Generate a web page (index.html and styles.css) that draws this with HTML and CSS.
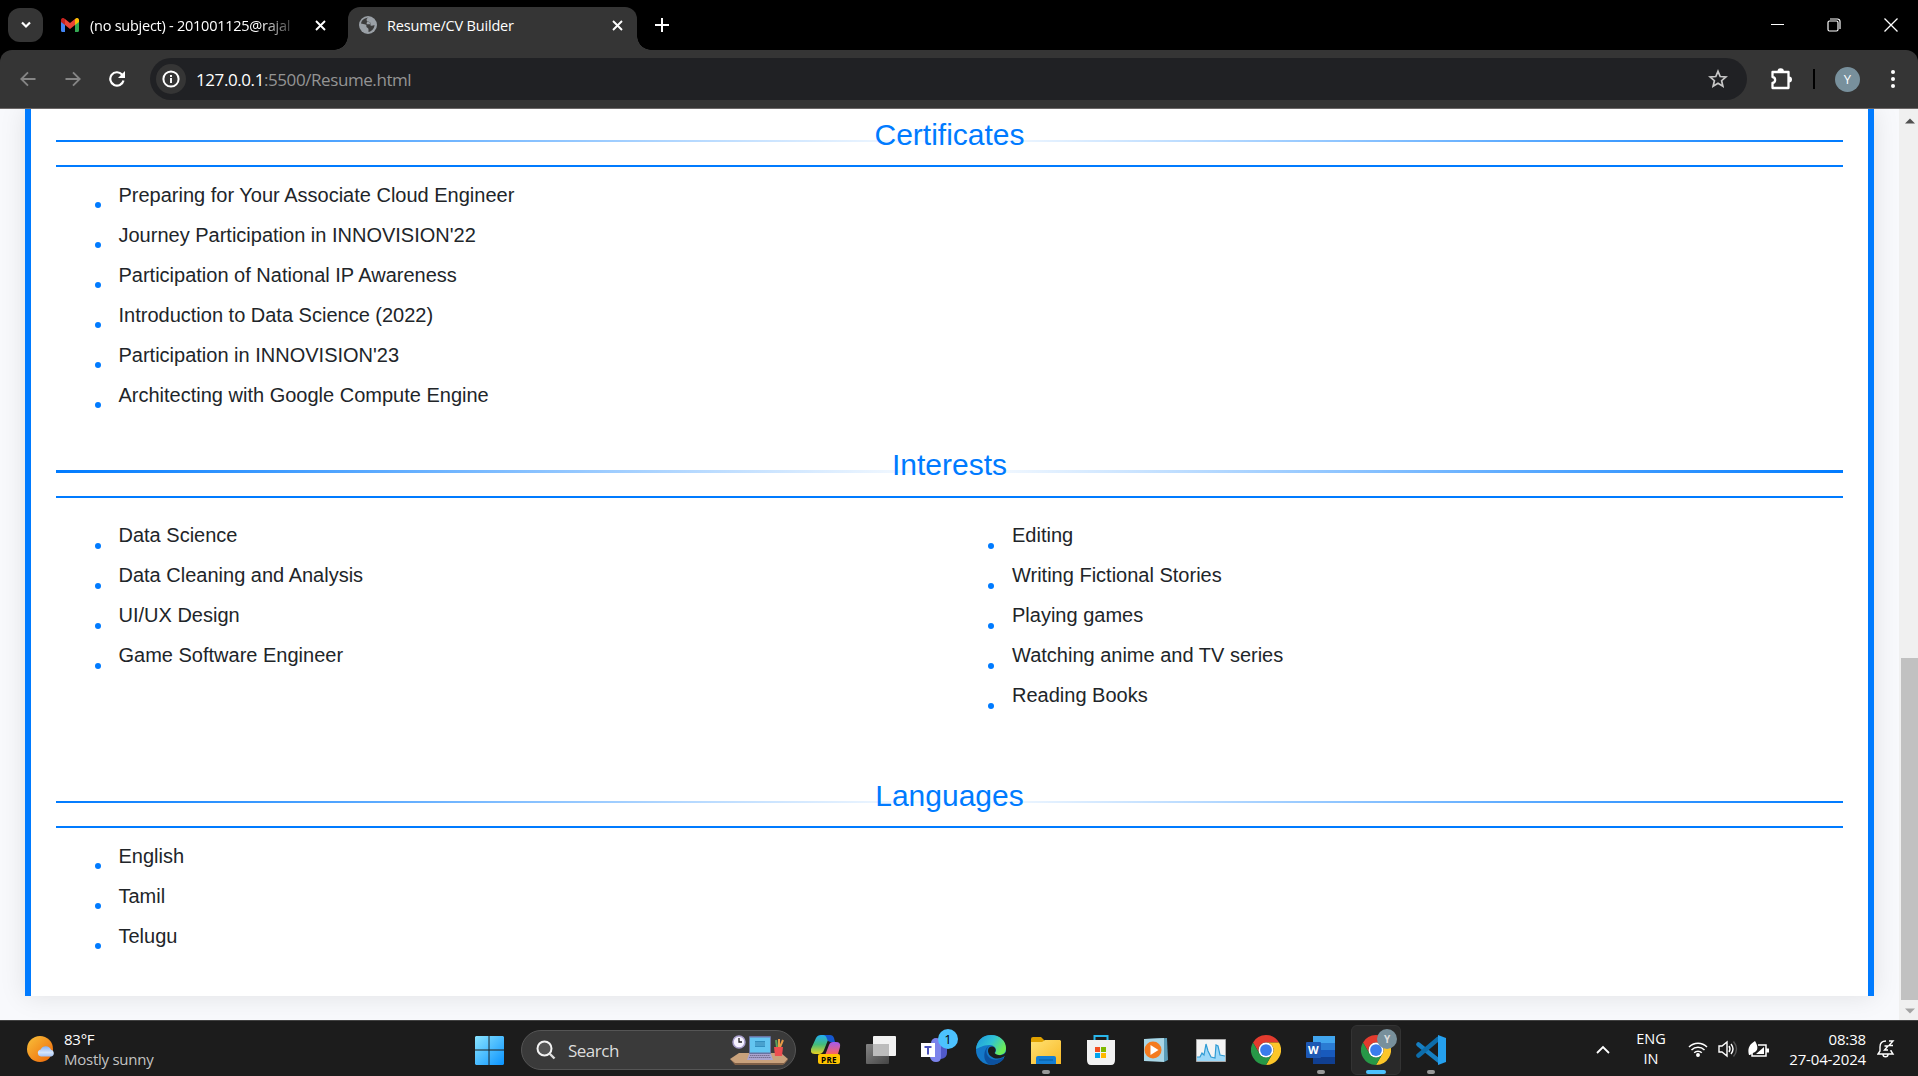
FILE: index.html
```html
<!DOCTYPE html>
<html lang="en">
<head>
<meta charset="utf-8">
<title>Resume/CV Builder</title>
<link rel="stylesheet" href="styles.css">
</head>
<body>
<svg class="defs" width="0" height="0" aria-hidden="true">
  <defs>
    <linearGradient id="win" x1="0" y1="0" x2="1" y2="1"><stop offset="0" stop-color="#8ae4ff"/><stop offset="1" stop-color="#0a93ff"/></linearGradient>
    <linearGradient id="sun" x1="0" y1="0" x2="1" y2="1"><stop offset="0" stop-color="#f8c13a"/><stop offset="1" stop-color="#ee6508"/></linearGradient>
    <linearGradient id="cloud" x1="0" y1="0" x2="0" y2="1"><stop offset="0" stop-color="#86b1f4"/><stop offset=".6" stop-color="#d5e5fc"/><stop offset="1" stop-color="#a4c3f5"/></linearGradient>
    <linearGradient id="copA" x1="0" y1="0" x2="0" y2="1"><stop offset="0" stop-color="#22aef2"/><stop offset=".5" stop-color="#44bc7b"/><stop offset="1" stop-color="#e8d220"/></linearGradient>
    <linearGradient id="copB" x1="0" y1="0" x2="0" y2="1"><stop offset="0" stop-color="#a45af0"/><stop offset="1" stop-color="#fa665f"/></linearGradient>
    <linearGradient id="edgeA" x1="0" y1="0" x2="1" y2=".5"><stop offset="0" stop-color="#1d94e0"/><stop offset=".55" stop-color="#30c3d4"/><stop offset="1" stop-color="#6bec58"/></linearGradient>
    <linearGradient id="fold" x1="0" y1="0" x2="1" y2="1"><stop offset="0" stop-color="#ffe174"/><stop offset="1" stop-color="#f9b925"/></linearGradient>
    <linearGradient id="grey" x1="0" y1="0" x2="1" y2="1"><stop offset="0" stop-color="#858585"/><stop offset="1" stop-color="#444"/></linearGradient>
    <symbol id="chrome" viewBox="0 0 48 48">
      <path fill="#e33b2e" d="M24 0a24 24 0 0 1 20.8 12H24a12 12 0 0 0-10.4 18L3.2 12A24 24 0 0 1 24 0z"/>
      <path fill="#fcc629" d="M44.8 12A24 24 0 0 1 24 48l10.4-18A12 12 0 0 0 24 12z"/>
      <path fill="#279847" d="M3.2 12A24 24 0 0 0 24 48l10.4-18a12 12 0 0 1-20.8 0z"/>
      <circle cx="24" cy="24" r="12" fill="#fff"/><circle cx="24" cy="24" r="9.4" fill="#3a7cec"/>
    </symbol>
  </defs>
</svg>

<header class="tabstrip">
  <button class="tab-search" aria-label="Search tabs"><svg width="12" height="8" viewBox="0 0 12 8"><path d="M2 1.5 6 5.5 10 1.5" fill="none" stroke="#fff" stroke-width="2.2"/></svg></button>
  <div class="tab idle">
    <svg width="18" height="14" viewBox="0 0 18 14"><path fill="#4285f4" d="M0 2v10.5c0 .8.6 1.5 1.4 1.5H4V5z"/><path fill="#34a853" d="M18 2v10.5c0 .8-.6 1.5-1.4 1.5H14V5z"/><path fill="#ea4335" d="M4 7V1l5 4 5-4v6l-5 4z"/><path fill="#c5221f" d="M0 2C0 .2 2 -.6 3.300 .4L4 1v6L0 4z"/><path fill="#fbbc04" d="M18 2c0-1.800-2-2.600-3.300-1.600L14 1v6l4-3z"/></svg>
    <span class="tab-title fade">(no subject) - 201001125@rajal</span>
    <svg class="x" width="11" height="11" viewBox="0 0 11 11"><path d="m1 1 9 9M10 1 1 10" stroke="#fff" stroke-width="1.9"/></svg>
  </div>
  <div class="tab active">
    <svg width="18" height="18" viewBox="0 0 18 18"><circle cx="9" cy="9" r="9" fill="#9aa0a6"/><path d="M10 1.500C7 2 7 5 9 5.500s3 1 2.500 3 2.500 1 4 .500c-.200 4-3 6.500-6 7v-2.500c0-1.500-1.500-1.500-2-2.500s.500-2-1-2.500L2 7.500C2.500 4.500 5 1.800 10 1.500z" fill="#3c3c3c"/><path d="M8 5.500c2 .2 3.500 1 3.500 2.700H7.500z" fill="#9aa0a6"/></svg>
    <span class="tab-title">Resume/CV Builder</span>
    <svg class="x" width="11" height="11" viewBox="0 0 11 11"><path d="m1 1 9 9M10 1 1 10" stroke="#fff" stroke-width="1.9"/></svg>
  </div>
  <svg class="plus" width="14" height="14" viewBox="0 0 14 14"><path d="M7 0v14M0 7h14" stroke="#fff" stroke-width="2"/></svg>
  <div class="window-buttons">
    <svg width="14" height="14" viewBox="0 0 14 14"><path d="M1 6.500h13" stroke="#fff" stroke-width="1"/></svg>
    <svg width="14" height="14" viewBox="0 0 14 14" fill="none" stroke="#fff" stroke-width="1.200"><rect x="1" y="3" width="10" height="10" rx="1.500"/><path d="M3 1h7.500a2.500 2.500 0 0 1 2.500 2.500V11"/></svg>
    <svg width="14" height="14" viewBox="0 0 14 14"><path d="m.5.5 13 13m0-13-13 13" stroke="#fff" stroke-width="1.300"/></svg>
  </div>
</header>

<nav class="toolbar">
  <svg width="16" height="16" viewBox="0 0 16 16" fill="none" stroke="#858585" stroke-width="1.900"><path d="M15.500 8H1.500M8 1.300 1.300 8 8 14.700"/></svg>
  <svg width="16" height="16" viewBox="0 0 16 16" fill="none" stroke="#858585" stroke-width="1.900"><path d="M.5 8h14M8 1.300 14.700 8 8 14.700"/></svg>
  <svg width="16" height="16" viewBox="0 0 16 16"><path d="M14.500 9.500A6.700 6.700 0 1 1 13 3.500L14 4.500" fill="none" stroke="#fff" stroke-width="2.200"/><path d="M16 0v7H9z" fill="#fff"/></svg>
  <div class="omnibox">
    <span class="info"><svg width="18" height="18" viewBox="0 0 18 18"><circle cx="9" cy="9" r="7.600" fill="none" stroke="#fff" stroke-width="2"/><path d="M9 8v5M9 5v2" stroke="#fff" stroke-width="1.900"/></svg></span>
    <span class="url">127.0.0.1<i>:5500/Resume.html</i></span>
    <svg class="star" width="20" height="20" viewBox="0 0 20 20"><path d="m10 2.300 2.200 5.200 5.700.500-4.300 3.700 1.300 5.600-4.900-3-4.900 3 1.300-5.600L2.100 8l5.700-.5z" fill="none" stroke="#c7c7c7" stroke-width="1.700"/></svg>
  </div>
  <svg class="puzzle" width="22" height="22" viewBox="0 0 22 22"><path d="M2.500 4h16v16h-16v-5c3.500-.5 3.500-5.500 0-6z" fill="none" stroke="#fff" stroke-width="2.300" stroke-linejoin="round"/><path d="M7.500 3.500a3.200 3.200 0 0 1 6.400 0zM19 8.500a3 3 0 0 1 0 6z" fill="#fff"/></svg>
  <span class="divider"></span>
  <span class="avatar">Y</span>
  <svg class="dots" width="4" height="18" viewBox="0 0 4 18" fill="#fff"><circle cx="2" cy="2" r="2"/><circle cx="2" cy="9" r="2"/><circle cx="2" cy="16" r="2"/></svg>
</nav>

<div class="viewport">
  <main class="page">
    <article class="resume">
      <section class="certificates">
        <h2>Certificates</h2>
        <ul><li>Preparing for Your Associate Cloud Engineer</li><li>Journey Participation in INNOVISION'22</li><li>Participation of National IP Awareness</li><li>Introduction to Data Science (2022)</li><li>Participation in INNOVISION'23</li><li>Architecting with Google Compute Engine</li></ul>
      </section>
      <section class="interests">
        <h2>Interests</h2>
        <div class="columns">
          <ul><li>Data Science</li><li>Data Cleaning and Analysis</li><li>UI/UX Design</li><li>Game Software Engineer</li></ul>
          <ul><li>Editing</li><li>Writing Fictional Stories</li><li>Playing games</li><li>Watching anime and TV series</li><li>Reading Books</li></ul>
        </div>
      </section>
      <section class="languages">
        <h2>Languages</h2>
        <ul><li>English</li><li>Tamil</li><li>Telugu</li></ul>
      </section>
    </article>
  </main>
  <aside class="scrollbar">
    <svg width="10" height="6" viewBox="0 0 10 6"><path d="M0 5.500 5 .5l5 5z" fill="#505050"/></svg>
    <span class="thumb"></span>
    <svg width="10" height="6" viewBox="0 0 10 6"><path d="M0 .5 5 5.500l5-5z" fill="#a3a3a3"/></svg>
  </aside>
</div>

<footer class="taskbar">
  <div class="weather">
    <svg width="28" height="26" viewBox="0 0 28 26"><circle cx="13" cy="13" r="13" fill="url(#sun)"/><path d="M14 20.500a3.600 3.600 0 0 1-.300-7.100 5.700 5.700 0 0 1 10.300.300 3.500 3.500 0 0 1 .300 6.800z" fill="url(#cloud)"/></svg>
    <p>83°F<br><span>Mostly sunny</span></p>
  </div>
  <div class="apps">
    <svg class="start" width="29" height="29" viewBox="0 0 30 30" fill="url(#win)"><path d="M1 0h13v14H0V1zM15 0h14l1 1v13H15zM0 15h14v15H1l-1-1zM15 15h15v14l-1 1H15z"/></svg>
    <div class="search">
      <svg width="20" height="20" viewBox="0 0 20 20"><circle cx="8.500" cy="8.500" r="7" fill="#555" stroke="#f3f3f3" stroke-width="2"/><path d="m13.500 13.500 5 5" stroke="#ddd" stroke-width="2.400"/></svg>
      <span>Search</span>
      <svg class="desk" width="58" height="30" viewBox="0 0 58 30"><path d="M9 18h42l7 6-4 5H5l-5-5z" fill="#c9a27c"/><path d="m0 24 5 4h49l4-4v1l-5 5H5z" fill="#806047"/><circle cx="9" cy="7" r="6" fill="#f6f2ff" stroke="#aaa0cd" stroke-width="1.500"/><path d="M9 3v4h3" fill="none" stroke="#222" stroke-width="1.300"/><rect x="19" y="1" width="22" height="18" rx="1" fill="#6873a2"/><rect x="20" y="2.500" width="20" height="15" fill="#63c5f1"/><rect x="25" y="6" width="10" height="6" fill="#328fc1"/><path d="M25 8h10M25 10h10" stroke="#81cef0" stroke-width=".6"/><path d="M19 19h22l2 6H17z" fill="#aaa4cf"/><path d="M20 20.500h20M19 22.500h22" stroke="#767091" stroke-dasharray="1.500 .5"/><path d="m47 12-1-7" stroke="#5aa05a" stroke-width="2"/><path d="M49 12V4M50 12l3-7" stroke="#e79b46" stroke-width="2"/><path d="M44 12h9l-1 9h-7z" fill="#ed4d50"/></svg>
    </div>
    <div class="app copilot"><svg width="30" height="30" viewBox="0 0 30 30"><path d="M5 3q1.500-3 5-3h9l-6 15q-1.500 4-5 4H4q-5 0-4-5z" fill="url(#copA)"/><path d="M12 0h7q3 0 4 3l1 4h-4q-3 0-4-3-1-4-4-4z" fill="#1557cf"/><path d="M18 10q1-3 4-3h3q5 0 4 5l-2 7H14.500z" fill="url(#copB)"/><rect x="7" y="19" width="22" height="10" rx="2" fill="#ffc400"/></svg><b>PRE</b></div>
    <div class="app"><svg width="30" height="28" viewBox="0 0 30 28"><rect x="7" width="23" height="20" rx="1" fill="#f2f2f2"/><rect y="8" width="23" height="20" rx="1" fill="url(#grey)"/><path d="M7 8h16v12H7z" fill="#bcbcbc"/></svg></div>
    <div class="app teams"><svg width="30" height="28" viewBox="0 0 30 28"><circle cx="15" cy="7" r="5" fill="#7b83eb"/><path d="M17 9h9v8q0 5-6 6h-3z" fill="#5059c9"/><path d="M8 9h12v12q0 5-5 5t-6-5z" fill="#7b83eb"/><rect y="7" width="14" height="14" fill="#fff"/><path d="M3.500 11h7M7 11v7.500" stroke="#4b53bc" stroke-width="2"/></svg><b>1</b></div>
    <div class="app"><svg width="30" height="30" viewBox="0 0 30 30"><circle cx="15" cy="15" r="15" fill="#1478c8"/><path d="M0 14C1 5 7 0 15 0c9 0 15 6 15 13 0 5-3 7-7 7-3 0-4-1-4-2 1-1 1-2 1-3 0-3-3-5-7-5C7 10 3 13 0 14z" fill="url(#edgeA)"/><path d="M13 11c-4 3-3 9 1 12 4 2.500 9 2 13-.5l1 1c-3 4-8 6.500-13 6.500C6 28 7 14 13 11z" fill="#0c519f"/><path d="M16.500 11.500c-5-.5-6 6-2 9.500 3.500 3 8 3.200 12 1.300l3.500-1.800v-3.500c-3 4-8 4-11 1.500-.5-.500-.300-1 .300-2 1.200-2-.300-4.500-2.800-5z" fill="#1c1c1c"/></svg></div>
    <div class="app run"><svg width="30" height="27" viewBox="0 0 30 27"><path d="M0 2q0-2 2-2h8l4 4v7H0z" fill="#e0a100"/><path d="M0 5h11l3-2h15l1 1v23H0z" fill="url(#fold)"/><path d="M5 27v-6q0-2 2-2h16q2 0 2 2v6z" fill="#147ed3"/><path d="M8 23h14" stroke="#075a9d"/></svg></div>
    <div class="app"><svg width="30" height="30" viewBox="0 0 30 30"><path d="M8.500 7V1h13v6" fill="none" stroke="#29b7ec" stroke-width="2"/><path d="M1 5h28v20q0 5-4 5H5q-4 0-4-5z" fill="#f2f2f2"/><path d="M9 12h5v5H9z" fill="#f25022"/><path d="M15 12h5v5h-5z" fill="#7fba00"/><path d="M9 18h5v5H9z" fill="#00a4ef"/><path d="M15 18h5v5h-5z" fill="#ffb900"/></svg></div>
    <div class="app"><svg width="26" height="26" viewBox="0 0 26 26"><path d="m3 2 21-1 1 22-4 2z" fill="#5a9cb8"/><path d="m1 2 20-1v24L1 24z" fill="#a9d6e6"/><circle cx="10" cy="13" r="8.500" fill="#f47b20"/><path d="M7.500 8v10l8-5z" fill="#fff"/></svg></div>
    <div class="app"><svg width="30" height="23" viewBox="0 0 30 23"><path fill="#f4f4f4" stroke="#aaa" d="M.5.5h29v22H.5z"/><path d="M1 18h3l2-4 2 2 2-11 2 7 3 6 4 1 1-13 2 1 2 9 5 1v5H1z" fill="#9cd8f8"/><path d="M1 18h3l2-4 2 2 2-11 2 7 3 6 4 1 1-13 2 1 2 9 5 1" fill="none" stroke="#309bd4" stroke-width="1.200"/></svg></div>
    <div class="app"><svg width="30" height="30"><use href="#chrome"/></svg></div>
    <div class="app run word"><svg width="30" height="28" viewBox="0 0 30 28"><path fill="#41a5ee" d="M7 0h22v7H7z"/><path fill="#2b7cd3" d="M7 7h22v7H7z"/><path fill="#185abd" d="M7 14h22v7H7z"/><path fill="#103f91" d="M7 21h22v7H7z"/><rect y="6" width="15" height="16" rx="1" fill="#1d58b4"/></svg><b>W</b></div>
    <div class="app run current"><svg width="30" height="30"><use href="#chrome"/></svg><b>Y</b></div>
    <div class="app run"><svg width="30" height="30" viewBox="0 0 30 30"><path d="m2.500 9.500 20 16" stroke="#167fc2" stroke-width="4.500" stroke-linecap="round"/><path d="M2.500 20.500 22 4" stroke="#0d6dab" stroke-width="4.500" stroke-linecap="round"/><path d="m22 0 8 3v24l-8 3z" fill="#25a0ee"/></svg></div>
  </div>
  <div class="tray">
    <svg class="up" width="14" height="9" viewBox="0 0 14 9"><path d="m1 8 6-6 6 6" fill="none" stroke="#fff" stroke-width="1.800"/></svg>
    <p class="lang">ENG<br>IN</p>
    <svg class="wifi" width="20" height="16" viewBox="0 0 20 16" fill="none" stroke="#fff" stroke-width="1.500"><path d="M1 6a12.700 12.700 0 0 1 18 0M3.500 9a9.200 9.200 0 0 1 13 0M6.200 11.700a5.400 5.400 0 0 1 7.600 0"/><circle cx="10" cy="14" r="1.200" fill="#fff"/></svg>
    <svg class="sound" width="20" height="18" viewBox="0 0 20 18" fill="none" stroke="#fff" stroke-width="1.400"><path d="M1 6h3l5-4v14l-5-4H1zM11 6q2 3 0 6M13 4q4 5 0 10"/><path d="M15.500 1.500q6 7.500 0 15" stroke="#555"/></svg>
    <svg class="battery" width="21" height="17" viewBox="0 0 21 17"><path d="M10 4h8v11H4v-3" fill="none" stroke="#fff" stroke-width="1.500"/><path d="M18 7.500h3v4h-3zM8 13l8-7v7zM1 14C-1 7 2 3 7 0c3 5 4 10-2 12l-3 2z" fill="#fff"/></svg>
    <p class="clock">08:38<br>27-04-2024</p>
    <svg class="bell" width="18" height="18" viewBox="0 0 18 18" fill="none" stroke="#fff" stroke-width="1.400"><path d="M9 1C5 1 3 3 3 7v4l-2 3h15l-2-3v-1M6 14.500c0 3 5 3 5 0M12 1h4l-4 4.500h4M7.500 6H11l-3.500 4H11"/></svg>
  </div>
</footer>
</body>
</html>
```
FILE: styles.css
```css
* { box-sizing: border-box; }
body { margin: 0; width: 1918px; height: 1076px; overflow: hidden; display: flex; flex-direction: column; background: #000; font-family: "Open Sans", "Noto Sans", sans-serif; }
svg { display: block; flex: none; }
p { margin: 0; }
.defs { position: absolute; }

.tabstrip { height: 50px; display: flex; align-items: center; padding-left: 8px; color: #fff; }
.tab-search { width: 35px; height: 34px; margin-right: 18px; border: 0; border-radius: 12px; background: #353535; display: flex; align-items: center; justify-content: center; padding: 0; }
.tab { display: flex; align-items: center; font-size: 14.5px; letter-spacing: -.25px; }
.idle { width: 287px; padding-right: 22px; }
.active { width: 289px; height: 43px; margin-top: 7px; padding: 0 14px 7px 11px; border-radius: 12px 12px 0 0; background: #353535; position: relative; }
.active::before, .active::after { content: ""; position: absolute; bottom: 0; width: 14px; height: 14px; }
.active::before { left: -14px; background: radial-gradient(circle at 0 0, transparent 13.5px, #353535 14px); }
.active::after { right: -14px; background: radial-gradient(circle at 100% 0, transparent 13.5px, #353535 14px); }
.tab-title { margin-left: 11px; white-space: nowrap; }
.active .tab-title { margin-left: 10px; letter-spacing: -.18px; }
.fade { width: 210px; -webkit-mask-image: linear-gradient(90deg, #000 170px, transparent 210px); mask-image: linear-gradient(90deg, #000 170px, transparent 210px); }
.x { margin-left: auto; }
.plus { margin-left: 18px; }
.window-buttons { margin-left: auto; margin-right: 20px; display: flex; gap: 43px; }

.toolbar { height: 59px; display: flex; align-items: center; padding: 0 23px 0 20px; background: #353535; border-bottom: 1px solid #6b6767; border-radius: 12px 12px 0 0; }
.toolbar > svg + svg { margin-left: 28.5px; }
.omnibox { width: 1597px; height: 42px; margin-left: 25px; padding: 0 19px 0 6px; border-radius: 21px; background: #202124; display: flex; align-items: center; }
.info { width: 30px; height: 30px; border-radius: 50%; background: #353535; display: flex; align-items: center; justify-content: center; }
.url { margin-left: 10px; color: #fff; font-size: 17px; letter-spacing: -.42px; }
.url i { font-style: normal; color: #949494; }
.star { margin-left: auto; }
.puzzle { margin-left: 23px; }
.divider { width: 2px; height: 20px; margin-left: 21px; background: #000; }
.avatar { width: 25px; height: 25px; margin-left: 20px; border-radius: 50%; background: #78909c; color: #fff; font-size: 13px; display: flex; align-items: center; justify-content: center; }
.dots { margin-left: auto; }

.viewport { height: 911px; display: flex; background: #f8f9fa; overflow: hidden; }
.page { width: 1899px; padding: 0 25px; background: #f8f9fc; overflow: hidden; }
.resume { height: 887px; padding: 0 25px; border: solid #007bff; border-width: 0 6px; background: #fff; box-shadow: 0 0 25px rgba(0, 0, 0, .1); color: #212529; font: 20px/30px "Liberation Sans", Arial, sans-serif; }
.resume h2 { height: 58px; margin: 0; padding-top: 8px; border-bottom: 2px solid #007bff; color: #007bff; font-size: 30px; line-height: 36px; font-weight: 400; text-align: center; background: linear-gradient(90deg, #007bff, #fff 50%, #007bff) 0 31px / 100% 2px no-repeat; }
.certificates { height: 331px; }
.interests { height: 330px; }
.interests h2 { padding-top: 7px; background-position: 0 30px; background-size: 100% 3px; }
.resume ul { margin: 0; padding: 11px 0 0 62.5px; list-style: none; }
.resume li { height: 40px; padding-top: 2px; display: flex; align-items: flex-start; }
.resume li::before { content: ""; width: 6px; height: 6px; margin: 22px 18px 0 -24px; border-radius: 50%; background: #007bff; }
.columns { display: grid; grid-template-columns: 1fr 1fr; padding-top: 9px; }
.columns li::before { margin-top: 23px; }

.scrollbar { width: 19px; background: #f0f0f0; display: flex; flex-direction: column; align-items: center; padding: 9px 0 6px 2px; }
.thumb { width: 17px; height: 342px; margin-top: auto; margin-bottom: 8px; background: #c1c1c1; }

.taskbar { height: 56px; display: flex; position: relative; background: #1c1c1c; border-top: 1px solid #414141; color: #fff; font-size: 15px; line-height: 20px; }
.weather { width: 475px; padding: 8px 0 0 27px; display: flex; gap: 9px; letter-spacing: -.25px; }
.weather svg { margin-top: 7px; }
.weather span { color: #c3c3c3; }
.apps { display: flex; align-items: flex-start; }
.start { margin-top: 15px; }
.search { width: 275px; height: 40px; margin: 9px 3px 0 17px; padding: 0 7px 0 14px; border: 1px solid #555; border-radius: 20px; background: #3a3a3a; display: flex; align-items: center; color: #ddd; font-size: 17px; letter-spacing: -.5px; }
.search span { margin: 2px 0 0 12px; }
.desk { margin-left: auto; }
.app { width: 50px; height: 50px; margin: 4px 2.5px 0; border-radius: 6px; display: flex; align-items: center; justify-content: center; position: relative; left: -.5px; }
.run::after { content: ""; position: absolute; bottom: 1px; left: 21px; width: 8px; height: 4px; border-radius: 2px; background: #999; }
.current { background: #292929; border: 1px solid #333; }
.current::after { width: 20px; left: 14px; bottom: 0; background: #4cc2ff; }
.app b { position: absolute; line-height: 20px; text-align: center; }
.copilot b { left: 20px; top: 25px; font-size: 8px; letter-spacing: .4px; color: #000; }
.teams b { right: 3px; top: 4px; width: 20px; height: 20px; border-radius: 50%; background: #4cc2ff; color: #000; font-size: 13px; font-weight: 400; }
.word b { left: 12px; top: 15px; font-size: 11px; }
.current b { right: 3px; top: 3px; width: 20px; height: 20px; border-radius: 50%; background: #78909c; color: #ddd; font-size: 10px; }
.tray { margin-left: auto; padding: 1px 23px 0 0; display: flex; align-items: center; }
.lang { margin-left: 26px; width: 30px; text-align: center; font-size: 14.5px; }
.wifi { margin-left: 22px; }
.sound { margin-left: 10px; }
.battery { margin-left: 10px; }
.clock { margin-left: 9px; width: 88px; text-align: right; white-space: nowrap; letter-spacing: -.15px; }
.bell { margin-left: 11px; }
```
